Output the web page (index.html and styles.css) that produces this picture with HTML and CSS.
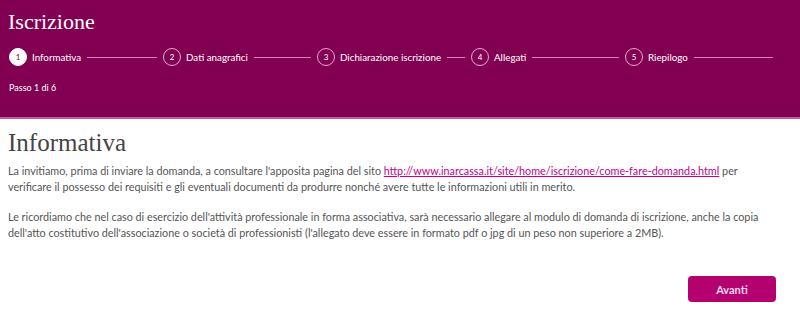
FILE: index.html
```html
<!DOCTYPE html>
<html lang="it">
<head>
    <meta charset="UTF-8">
    <meta name="viewport" content="width=device-width, initial-scale=1.0">
    <title>Iscrizione</title>
    <link rel="stylesheet" href="styles.css">
</head>
<body>

    <!-- Header with stepper -->
    <div class="header">
        <h1>Iscrizione</h1>
        <div class="stepper">
            <div class="step active">
                <span class="circle">1</span>
                <span class="label">Informativa</span>
                <span class="line"></span>
            </div>
            <div class="step">
                <span class="circle">2</span>
                <span class="label">Dati anagrafici</span>
                <span class="line"></span>
            </div>
            <div class="step">
                <span class="circle">3</span>
                <span class="label">Dichiarazione iscrizione</span>
                <span class="line"></span>
            </div>
            <div class="step">
                <span class="circle">4</span>
                <span class="label">Allegati</span>
                <span class="line"></span>
            </div>
            <div class="step">
                <span class="circle">5</span>
                <span class="label">Riepilogo</span>
                <span class="line"></span>
            </div>
        </div>
        <div class="passo">Passo 1 di 6</div>
    </div>

    <!-- Content -->
    <div class="content">
        <h2>Informativa</h2>
        <p>La invitiamo, prima di inviare la domanda, a consultare l'apposita pagina del sito <a href="#">http://www.inarcassa.it/site/home/iscrizione/come-fare-domanda.html</a> per verificare il possesso dei requisiti e gli eventuali documenti da produrre nonché avere tutte le informazioni utili in merito.</p>
        <p>Le ricordiamo che nel caso di esercizio dell'attività professionale in forma associativa, sarà necessario allegare al modulo di domanda di iscrizione, anche la copia dell'atto costitutivo dell'associazione o società di professionisti (l'allegato deve essere in formato pdf o jpg di un peso non superiore a 2MB).</p>
        <div class="actions">
            <button class="btn">Avanti</button>
        </div>
    </div>

</body>
</html>
```

FILE: styles.css
```css
/* Basic reset */
* {
    margin: 0;
    padding: 0;
    box-sizing: border-box;
}

body {
    font-family: Lato, "Liberation Sans", sans-serif;
    background-color: #fff;
    color: #555;
}

/* Header */
.header {
    background-color: #820052;
    border-bottom: 2px solid #c45aa6;
    height: 119px;
    padding: 10px 8px 0 9px;
    color: #fff;
}

.header h1 {
    font-family: "Liberation Serif", serif;
    font-weight: normal;
    font-size: 22px;
    line-height: 24px;
    margin-left: -1px;
}

/* Stepper */
.stepper {
    display: flex;
    width: 770px;
    margin-top: 14px;
}

.step {
    flex: 1;
    display: flex;
    align-items: center;
    font-size: 9.8px;
}

.circle {
    width: 18px;
    height: 18px;
    border: 1px solid #e8a6d6;
    border-radius: 50%;
    display: flex;
    align-items: center;
    justify-content: center;
    font-size: 8px;
    flex-shrink: 0;
}

.step.active .circle {
    background-color: #fff;
    border-color: #fff;
    color: #820052;
}

.label {
    margin-left: 5px;
    white-space: nowrap;
}

.line {
    flex: 1;
    height: 1px;
    background-color: #d77fc0;
    margin: 0 6px;
}

.passo {
    font-size: 9px;
    margin-top: 16px;
}

/* Content */
.content {
    padding: 10px 8px 0 8px;
}

.content h2 {
    font-family: "Liberation Serif", serif;
    font-weight: normal;
    font-size: 25px;
    line-height: 28px;
    color: #444;
    margin-bottom: 6px;
}

.content p {
    max-width: 774px;
    font-size: 10.8px;
    line-height: 16px;
    margin-bottom: 14px;
}

.content a {
    color: #c2008c;
}

.actions {
    display: flex;
    justify-content: flex-end;
    margin-top: 35px;
    padding-right: 16px;
}

.btn {
    background-color: #b5006f;
    color: #f8d9ef;
    border: none;
    border-radius: 4px;
    width: 88px;
    height: 26px;
    font-family: inherit;
    font-size: 11px;
    font-weight: bold;
}
```
